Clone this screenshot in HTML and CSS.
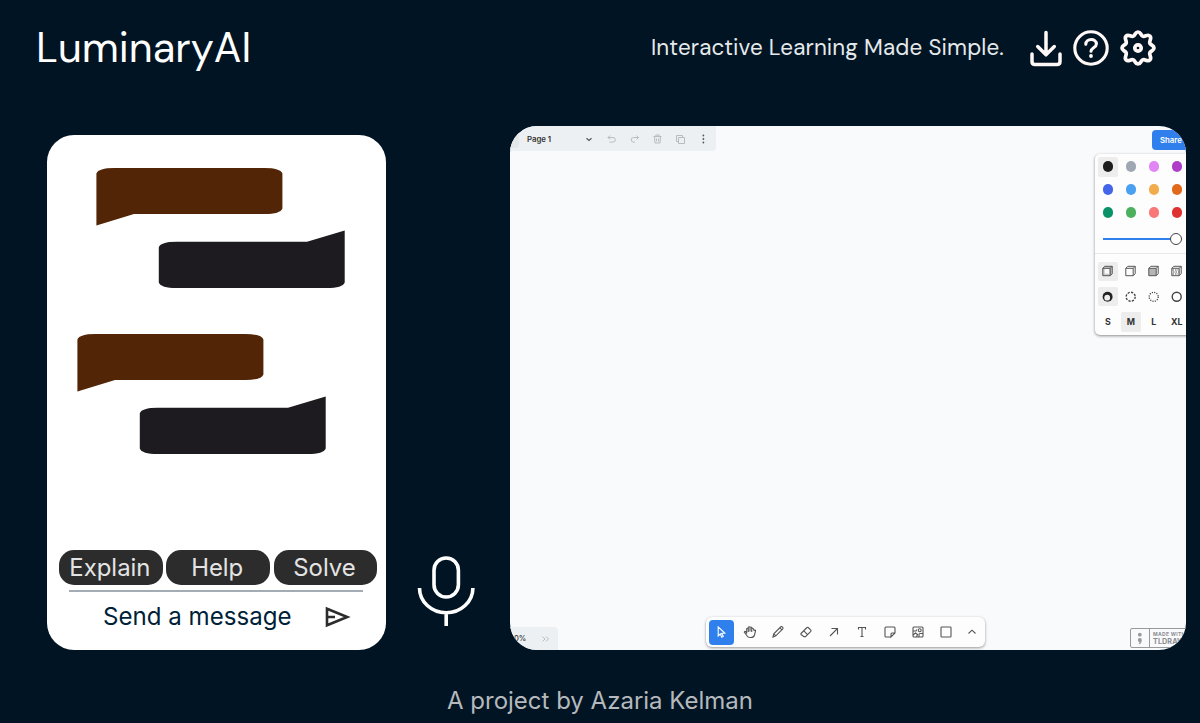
FILE: index.html
```html
<!DOCTYPE html>
<html lang="en">
<head>
<meta charset="utf-8">
<title>LuminaryAI</title>
<link rel="stylesheet" href="styles.css">
</head>
<body>
<header class="header">
  <h1 class="brand">LuminaryAI</h1>
  <p class="tagline">Interactive Learning Made Simple.</p>
  <nav class="actions">
    <svg class="icon-download" width="32" height="37" viewBox="0 0 32 37"><path d="M16 2.500v22M7.700 16.500l8.300 8.300 8.300-8.300M2 24v7.500q0 3 3 3h22q3 0 3-3v-7.500"/></svg>
    <svg class="icon-help" width="36" height="36" viewBox="0 0 36 36"><circle cx="18" cy="18" r="16.200"/><path d="M12.800 14.200c.2-6.200 10.600-6.200 10.600-.2 0 3.600-5.400 4-5.400 7.300"/><circle class="solid" cx="18" cy="26" r="1.900"/></svg>
    <svg class="icon-gear" width="36" height="36" viewBox="0 0 36 36"><path d="M14.300 5.400C15.600 3.700 15.800 2 18 2s2.400 1.700 3.700 3.400c1.200 1.400 2.400 1.100 4.200.4 2-.8 3.300-.6 4 .3.900.9 1.100 2 .3 4-.7 1.800-1 3 .4 4.200C32.300 15.600 34 15.800 34 18s-1.700 2.400-3.400 3.700c-1.400 1.200-1.100 2.400-.4 4.200.8 2 .6 3.100-.3 4-.7.900-2 1.100-4 .3-1.800-.7-3-1-4.200.4C20.400 32.300 20.200 34 18 34s-2.400-1.700-3.700-3.400c-1.200-1.400-2.400-1.100-4.200-.4-2 .8-3.100.6-4-.3-.9-.9-1.100-2-.3-4 .7-1.800 1-3-.4-4.200C3.700 20.400 2 20.200 2 18s1.700-2.400 3.400-3.700c1.400-1.200 1.100-2.400.4-4.200-.8-2-.6-3.100.3-4 .9-.9 2-1.100 4-.3 1.800.7 3 1 4.200-.4z"/><circle cx="18" cy="18" r="3.200"/></svg>
  </nav>
</header>

<main class="main">
  <section class="chat">
    <div class="messages">
      <svg class="bubble user first" viewBox="0 0 187 58"><path d="M.4 57.500V5.500Q2.400 0 18.400 0H168.400Q184.400 0 186.400 5.500V40.500Q184.400 46 168.400 46H38Z"/></svg>
      <svg class="bubble reply first" viewBox="0 0 187 58"><path d="M185.700.5V52.500Q183.700 58 167.700 58H17.700Q1.700 58-.2 52.500V17.300Q1.700 11.800 17.700 11.800H148Z"/></svg>
      <svg class="bubble user second" viewBox="0 0 187 58"><path d="M.4 57.500V5.500Q2.400 0 18.400 0H168.400Q184.400 0 186.400 5.500V40.500Q184.400 46 168.400 46H38Z"/></svg>
      <svg class="bubble reply second" viewBox="0 0 187 58"><path d="M185.700.5V52.500Q183.700 58 167.700 58H17.700Q1.700 58-.2 52.500V17.300Q1.700 11.800 17.700 11.800H148Z"/></svg>
    </div>
    <div class="prompts">
      <button class="prompt explain">Explain</button>
      <button class="prompt help">Help</button>
      <button class="prompt solve">Solve</button>
    </div>
    <div class="composer">
      <span class="placeholder">Send a message</span>
      <svg class="send" width="26" height="22" viewBox="0 0 26 22"><path d="M2 2.800 22.200 11 2 19.200ZM2 11h8"/></svg>
    </div>
  </section>

  <svg class="mic" width="58" height="72" viewBox="0 0 58 72"><rect x="17" y="3" width="24.400" height="39" rx="12.200"/><path d="M2.500 33a26.700 24.800 0 0 0 53.400 0M29.200 58v13"/></svg>

  <section class="board">
    <div class="pagebar">
      <i class="menu-edge"></i>
      <span class="page-name">Page 1</span>
      <svg class="page-icons" width="130" height="25" viewBox="584 126 130 25">
        <path class="dark" d="m586.500 138.300 2.500 2.200 2.500-2.200"/>
        <path d="m610 135.500-2 2 2 2M608 137.500h5a2.300 2.300 0 0 1 0 4.600h-3.500M636.500 135.500l2 2-2 2M638.500 137.500h-5a2.300 2.300 0 0 0 0 4.600h1.500"/>
        <path d="M653.500 136.500h8M655.800 136.300v-1.300h3.400v1.300M654.500 136.500l.5 6.500h5l.5-6.500M656.600 138.500v3M658.600 138.500v3"/>
        <path d="M678.500 141.500h-2v-6h6v2M678.500 137.500h6v6h-6z"/>
        <g class="dots"><circle cx="703.400" cy="135.500" r=".9"/><circle cx="703.400" cy="139" r=".9"/><circle cx="703.400" cy="142.500" r=".9"/></g>
      </svg>
    </div>
    <button class="share">Share</button>

    <aside class="style-panel">
      <div class="cells colors">
        <span class="cell active"><i class="dot black"></i></span><span class="cell"><i class="dot grey"></i></span><span class="cell"><i class="dot pink"></i></span><span class="cell"><i class="dot purple"></i></span>
        <span class="cell"><i class="dot blue"></i></span><span class="cell"><i class="dot sky"></i></span><span class="cell"><i class="dot yellow"></i></span><span class="cell"><i class="dot orange"></i></span>
        <span class="cell"><i class="dot teal"></i></span><span class="cell"><i class="dot green"></i></span><span class="cell"><i class="dot coral"></i></span><span class="cell"><i class="dot red"></i></span>
      </div>
      <div class="opacity"><i class="track"></i><i class="thumb"></i></div>
      <div class="cells options">
        <span class="cell active"><svg class="opt" viewBox="0 0 13 12"><path fill="#ccc" stroke="none" d="M1.500 3l2-2h8v8l-2 2h-8z"/><path fill="#fafafa" stroke="none" d="M3.800 4h4.200v4.600H3.800z"/><path d="M1.800 3.300h7.400v7.400H1.800zM1.800 3.300l2-2h7.400v7.400l-2 2M9.200 3.300l2-2"/></svg></span>
        <span class="cell"><svg class="opt" viewBox="0 0 13 12"><path d="M1.800 3.300h7.400v7.400H1.800zM1.800 3.300l2-2h7.400v7.400l-2 2M9.200 3.300l2-2"/></svg></span>
        <span class="cell"><svg class="opt" viewBox="0 0 13 12"><path fill="#b5b5b5" d="M1.800 3.300h7.400v7.400H1.800z"/><path d="m1.800 3.300 2-2h7.400v7.400l-2 2M9.200 3.300l2-2"/></svg></span>
        <span class="cell"><svg class="opt" viewBox="0 0 13 12"><path d="M1.800 3.300h7.400v7.400H1.800zM1.800 3.300l2-2h7.400v7.400l-2 2M9.200 3.300l2-2"/><path stroke-dasharray="1.500 1" d="M2.500 5h6M3 7h6M2.500 9h6"/></svg></span>
        <span class="cell active"><svg class="opt" viewBox="0 0 13 12"><circle cx="6.600" cy="5.800" r="5" fill="#222" stroke="none"/><circle cx="6.200" cy="6.700" r="2.900" fill="#ededed" stroke="none"/></svg></span>
        <span class="cell"><svg class="opt ring" viewBox="0 0 13 12"><circle cx="6.700" cy="5.800" r="4.500" stroke-dasharray="2.200 1.300"/></svg></span>
        <span class="cell"><svg class="opt ring" viewBox="0 0 13 12"><circle cx="6.700" cy="5.800" r="4.500" stroke-dasharray="1.100 1.250"/></svg></span>
        <span class="cell"><svg class="opt ring" viewBox="0 0 13 12"><circle cx="6.700" cy="5.800" r="4.500"/></svg></span>
        <span class="cell">S</span><span class="cell active">M</span><span class="cell">L</span><span class="cell">XL</span>
      </div>
    </aside>

    <div class="zoombar"><span class="zoom-value">0%</span><svg width="10" height="8" viewBox="0 0 10 8"><path d="m1.500 1.500 2.500 2.500-2.500 2.500M5 1.500 7.500 4 5 6.500"/></svg></div>

    <div class="tools">
      <span class="tool selected"><svg viewBox="0 0 14 14"><path d="m4.200 2 6.600 6-3.200.4 1.700 3-1.500.8-1.600-3.200-2 2z"/></svg></span>
      <span class="tool"><svg viewBox="0 0 14 14"><path d="M3.700 8.500V3.700q.8-1 1.600 0V7 2.200q.9-1 1.700 0v4.300-4q.9-1 1.700 0V7 3.800q.9-1 1.700 0L11 5.500q1.200-.8 1.600.2L11.500 10q-.7 2.500-3.500 2.500H7q-2 0-3-1.800L1.300 7.200q.2-1.200 1.400-.6z"/></svg></span>
      <span class="tool"><svg viewBox="0 0 14 14"><path d="m2 12 .8-3.200 7-7q1-.6 1.800.3t.2 1.800l-7 7zM9 2.800 11 5M2.800 8.800l2 2"/></svg></span>
      <span class="tool"><svg viewBox="0 0 14 14"><path d="m2 8.500 6-6q.6-.5 1.200 0l2.600 2.600q.5.600 0 1.200l-5.300 5.300H5L2 9.500q-.4-.5 0-1zM4.800 5.800l4 4"/></svg></span>
      <span class="tool"><svg viewBox="0 0 14 14"><path d="m3 11 7.500-7.500M4.500 3.500h6v6"/></svg></span>
      <span class="tool"><svg viewBox="0 0 14 14"><path d="M3.500 4.500v-2h7v2M7 2.500v9M5.500 11.500h3"/></svg></span>
      <span class="tool"><svg viewBox="0 0 14 14"><path d="M8 12H3q-1 0-1-1V3q0-1 1-1h8q1 0 1 1v5l-4 4V9q0-1 1-1h3"/></svg></span>
      <span class="tool"><svg viewBox="0 0 14 14"><rect x="2" y="2" width="10" height="10" rx="1"/><path d="M2 6h2.500q1 0 1-1V4.500M2 10l2.500-2 2 1.500L5.500 12M8 12V9.500q0-1 1-1h3"/><circle cx="8.700" cy="5.200" r="1.500"/></svg></span>
      <span class="tool"><svg viewBox="0 0 14 14"><rect x="2" y="2" width="10" height="10" rx=".8"/></svg></span>
      <span class="tool"><svg viewBox="0 0 14 14"><path d="M3.500 8.500 7 5.200l3.500 3.300"/></svg></span>
    </div>

    <div class="badge">
      <svg class="badge-mark" width="19" height="17" viewBox="0 0 19 17"><circle cx="9.300" cy="5" r="2"/><path d="M7.200 10.500a2.100 2.100 0 1 1 4.200.3q0 2.900-2.500 4.200l-.8-.7q1-.8 1-1.600-1.900-.2-1.900-2.200z"/></svg>
      <div class="badge-text"><span class="made">MADE WITH</span><span class="name">TLDRAW</span></div>
    </div>
  </section>
</main>

<footer class="footer">A project by Azaria Kelman</footer>
</body>
</html>
```

FILE: styles.css
```css
* { box-sizing: border-box; }
body {
  margin: 0;
  height: 723px;
  overflow: hidden;
  background: #001423;
  color: #fff;
  font-family: Inter, "Liberation Sans", sans-serif;
  display: flex;
  flex-direction: column;
}
svg { display: block; fill: none; flex: none; }
.header { height: 126px; padding: 0 44px 30px 36px; display: flex; align-items: center; }
.brand { margin: 0 auto 0 0; padding-bottom: 1px; font-family: "DM Sans", Inter, sans-serif; font-size: 41.600px; font-weight: 400; white-space: nowrap; }
.tagline { margin: 0 25px 0 0; padding-bottom: 1px; width: 354px; font-family: "DM Sans", Inter, sans-serif; font-size: 22.400px; font-weight: 400; letter-spacing: .13px; color: #e6e9eb; white-space: nowrap; }
.actions { display: flex; align-items: center; gap: 11px; stroke: #fff8f7; stroke-width: 3.500; stroke-linecap: round; stroke-linejoin: round; }
.icon-help { stroke-width: 3.100; }
.icon-help .solid { fill: #fff; stroke: none; }
.icon-gear { stroke-width: 3.700; }

.main { height: 524.400px; padding-left: 47px; display: flex; align-items: flex-end; }
.chat { width: 338.700px; height: 515.800px; background: #fff; border-radius: 27px; display: flex; flex-direction: column; }
.messages { height: 415.400px; padding-top: 33.400px; display: flex; flex-direction: column; }
.bubble { width: 187px; height: 58px; overflow: visible; }
.user { fill: #512505; }
.reply { fill: #1e1b20; }
.user.first { margin-left: 49px; }
.reply.first { margin: 4px 0 0 112px; }
.user.second { margin: 46px 0 0 30px; }
.reply.second { margin: 4px 0 0 93px; }
.prompts { display: flex; gap: 3.500px; padding-left: 12px; }
.prompt { width: 103.800px; height: 35px; border: 0; padding: 0 2px 0 0; border-radius: 15px; background: #2c2c2c; color: #e4e4e4; font: 400 23.900px Inter, sans-serif; }
.composer { margin: 5px 22.500px 0 22px; border-top: 2px solid #a3acb5; padding: 9px 12.500px 0 34px; display: flex; align-items: center; justify-content: space-between; color: #001f38; font-size: 24.100px; line-height: 32px; white-space: nowrap; }
.send { stroke: #2c2c2c; stroke-width: 2.600; }
.mic { margin: 0 35.300px 23.400px 31px; stroke: #fff; stroke-width: 3.600; }

.board { position: relative; width: 676px; height: 524.400px; border-radius: 27px; overflow: hidden; background: #f9fafc; color: #333; }
.pagebar { position: absolute; left: 0; top: 0; width: 206px; height: 25px; background: #edf0f2; border-radius: 0 0 4px; display: flex; align-items: center; }
.menu-edge { width: 9px; height: 22px; align-self: flex-start; background: #e4e7e9; border-radius: 0 0 4px; }
.page-name { width: 57px; margin-left: 8px; font-size: 7.800px; font-weight: 600; }
.page-icons { stroke: #b9bcbe; stroke-width: 1; }
.page-icons .dark { stroke: #555; stroke-width: 1.200; }
.page-icons .dots { fill: #555; stroke: none; }
.share { position: absolute; left: 642px; top: 4px; width: 44px; height: 20px; padding: 0 0 0 8px; border: 0; border-radius: 4px; background: #2f80ed; color: #fff; text-align: left; font: 600 7.800px Inter, sans-serif; }
.style-panel { position: absolute; left: 585px; top: 28px; width: 98px; height: 181px; padding: 1px 0 0 1.300px; background: #fdfdfd; border-radius: 5px; box-shadow: 0 1px 3px rgba(0,0,0,.45); }
.cells { display: grid; grid-template-columns: repeat(4, 23px); }
.colors { grid-auto-rows: 23px; }
.cell { display: flex; align-items: center; justify-content: center; font-size: 8.800px; font-weight: 700; }
.active { background: #ededed; background-clip: content-box; padding: 1.500px; border-radius: 4px; }
.dot { width: 10.400px; height: 10.400px; border-radius: 50%; }
.black { background: #1d1d1d; } .grey { background: #9fa8b2; } .pink { background: #e085f4; } .purple { background: #ae3ec9; }
.blue { background: #4465e9; } .sky { background: #4ba1f1; } .yellow { background: #f1ac4b; } .orange { background: #e16919; }
.teal { background: #099268; } .green { background: #4cb05e; } .coral { background: #f87777; } .red { background: #e03131; }
.opacity { height: 30px; margin-left: -1.300px; padding: 0 0 0 8px; border-bottom: 1px solid #e8e8e8; display: flex; align-items: center; }
.track { width: 68px; height: 2px; background: #2f80ed; }
.thumb { width: 12px; height: 12px; margin-left: -1px; background: #fff; border: 1.700px solid #444; border-radius: 50%; }
.options { padding-top: 4.500px; grid-auto-rows: 25.400px; }
.options .active { padding: 2.700px 1.500px; }
.opt { width: 13px; height: 12px; stroke: #555; stroke-width: 1; }
.ring { stroke: #444; stroke-width: 1.400; }
.zoombar { position: absolute; left: 0; bottom: 0; width: 48px; height: 23.400px; padding-left: 4px; background: #edf0f2; border-radius: 0 4px 0 0; display: flex; align-items: center; gap: 15px; font-size: 7.500px; font-weight: 500; stroke: #bbb; }
.zoom-value { width: 12px; }
.tools { position: absolute; left: 196px; top: 491px; width: 279px; height: 30px; padding-left: 1.500px; display: flex; align-items: center; background: #fdfdfd; border-radius: 6px; box-shadow: 0 1px 3px rgba(0,0,0,.4); }
.tool { width: 28.050px; flex: none; display: flex; justify-content: center; stroke: #555; stroke-width: 1.100; }
.tool svg { width: 14px; height: 14px; }
.tool:last-child { width: 25px; }
.tool.selected { width: 25px; height: 25px; margin: 0 1.500px; align-items: center; background: #2f80ed; border-radius: 4px; stroke: #fff; }
.badge { position: absolute; left: 620px; top: 502px; width: 72px; height: 20px; border: 1.500px solid #999; border-radius: 2px; display: flex; color: #8a8d90; }
.badge-mark { height: 100%; border-right: 1.500px solid #999; fill: #999; }
.badge-text { padding: 1.500px 0 0 3px; display: flex; flex-direction: column; white-space: nowrap; font-weight: 700; }
.made { font-size: 5px; line-height: 6px; letter-spacing: .3px; }
.name { font-size: 7.200px; line-height: 9px; letter-spacing: .1px; }
.footer { height: 72px; padding-top: 35.600px; text-align: center; color: #b5b9bd; font-size: 24px; line-height: 30px; font-weight: 400; }
```
